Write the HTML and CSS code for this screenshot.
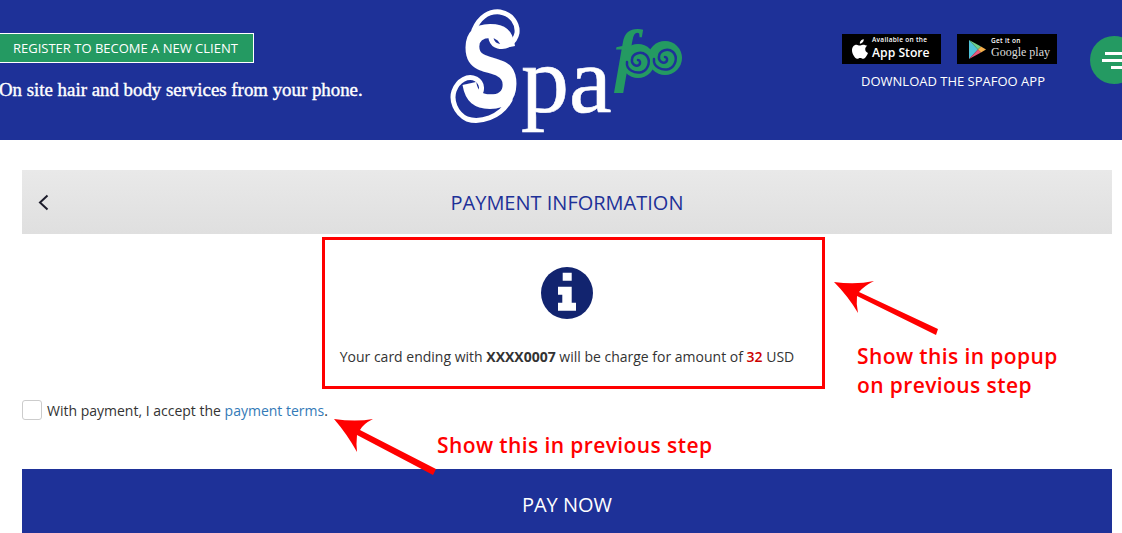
FILE: index.html
```html
<!DOCTYPE html>
<html lang="en">
<head>
    <meta charset="UTF-8">
    <meta name="viewport" content="width=device-width, initial-scale=1.0">
    <title>Spafoo - Payment Information</title>
    <link rel="stylesheet" href="styles.css">
</head>
<body>
    <!-- Header -->
    <div class="header">
        <div class="header-left">
            <a href="#" class="register-btn">REGISTER TO BECOME A NEW CLIENT</a>
            <p class="tagline">On site hair and body services from your phone.</p>
        </div>

        <svg class="logo" width="270" height="140" viewBox="0 0 270 140">
            <text class="logo-s" transform="translate(31 107) scale(0.75 1)">S</text>
            <g class="logo-curl">
                <path d="M44 30 C50 16 60 11 70 12 C82 14 88 24 87 33 C85 43 76 48 68 46 C61 44 59 36 63 32 C66 29 71 31 71 35"/>
                <path d="M80 100 C70 118 50 123 37 119 C25 113 21 100 24 91 C28 80 38 75 46 79 C53 83 53 92 48 95 C44 97 39 95 39 90"/>
            </g>
            <text class="logo-pa" x="91" y="112">pa</text>
            <text class="logo-f" x="184" y="78">f</text>
            <g class="logo-oo">
                <circle cx="208" cy="61" r="17"/>
                <circle cx="235" cy="58" r="17"/>
                <path class="logo-oo-swirl" transform="translate(208 61)" d="M-11 1 C-12 9 -3 13 4 11 C11 8 13 -1 8 -6 C3 -10 -5 -8 -6 -2 C-7 3 -2 6 1 4 C3 2 2 -1 0 -1"/>
                <path class="logo-oo-swirl" transform="translate(235 58)" d="M-11 1 C-12 9 -3 13 4 11 C11 8 13 -1 8 -6 C3 -10 -5 -8 -6 -2 C-7 3 -2 6 1 4 C3 2 2 -1 0 -1"/>
            </g>
        </svg>

        <div class="header-apps">
            <div class="badges">
                <a href="#" class="badge badge-apple">
                    <svg width="17" height="20" viewBox="0 0 18 21">
                        <path fill="#fff" d="M12.400 0.200c0.100 1.300-0.400 2.400-1.100 3.200-0.800 0.900-1.900 1.500-3 1.400-0.100-1.200 0.400-2.400 1.100-3.100 0.800-0.900 2-1.500 3-1.500zM16.200 7c-1.700 1.100-2.200 2.300-2.200 3.800 0 1.800 1.100 3.200 2.900 3.900-0.500 1.300-1 2.400-1.800 3.500-0.900 1.300-1.800 2.500-3.100 2.500-1.300 0-1.800-0.800-3.300-0.800-1.500 0-2 0.800-3.300 0.800-1.300 0-2.200-1.300-3.200-2.600C0.500 15.900 0 13.500 0 11.800 0 8.200 2.300 6 4.700 6c1.300 0 2.400 0.900 3.300 0.900 0.900 0 2.100-1 3.600-1 1.800 0 3.400 0.700 4.600 1.100z"/>
                    </svg>
                    <span class="badge-text">
                        <small>Available on the</small>
                        <b>App Store</b>
                    </span>
                </a>
                <a href="#" class="badge badge-google">
                    <svg width="17" height="19" viewBox="0 0 17 19">
                        <polygon fill="#4fc3d9" points="0,0 0,19 9,9.500"/>
                        <polygon fill="#6fd08c" points="0,0 12,6.500 9,9.500"/>
                        <polygon fill="#e8577a" points="0,19 12,12.500 9,9.500"/>
                        <polygon fill="#f5b04c" points="12,6.500 17,9.500 12,12.500 9,9.500"/>
                    </svg>
                    <span class="badge-text">
                        <small>Get it on</small>
                        <em>Google play</em>
                    </span>
                </a>
            </div>
            <p class="apps-caption">DOWNLOAD THE SPAFOO APP</p>
        </div>

        <a href="#" class="menu-btn">
            <span></span>
            <span></span>
            <span></span>
        </a>
    </div>

    <!-- Content -->
    <div class="content">
        <div class="title-bar">
            <svg class="back" width="11" height="17" viewBox="0 0 11 17">
                <path d="M9.500 1.500 L2 8.500 L9.500 15.500"/>
            </svg>
            <h1>PAYMENT INFORMATION</h1>
        </div>

        <div class="notice">
            <svg class="info-icon" width="52" height="52" viewBox="0 0 52 52">
                <circle cx="26" cy="26" r="26" fill="#12246f"/>
                <path fill="#fff" d="M17 19.700h13.700v16h4.300v8H17v-8h4.300v-8H17zM21.700 5.700h9v8h-9z"/>
            </svg>
            <p>Your card ending with <strong>XXXX0007</strong> will be charge for amount of <span class="amount">32</span> USD</p>
        </div>

        <label class="terms">
            <span class="checkbox"></span>
            <span>With payment, I accept the <a href="#">payment terms</a>.</span>
        </label>

        <a href="#" class="pay-btn">PAY NOW</a>
    </div>

    <!-- Review notes drawn over the page -->
    <svg class="notes" width="1122" height="533" viewBox="0 0 1122 533">
        <path d="M834 282 Q856 285 874 281 Q864 286 859 292 L938 329 L936 335 L857 296 Q856 304 858 313 Q848 296 834 282z"/>
        <path d="M334 419 Q356 422 373 419 Q363 424 360 430 L436 469 L433 475 L357 435 Q356 444 357 452 Q347 434 334 419z"/>
    </svg>
    <p class="note note-popup">Show this in popup<br>on previous step</p>
    <p class="note note-step">Show this in previous step</p>
</body>
</html>
```

FILE: styles.css
```css
html, body {
    margin: 0;
    height: 533px;
    overflow: hidden;
}

body {
    position: relative;
    background-color: #fff;
    font-family: "Open Sans", sans-serif;
    font-size: 14px;
    color: #333;
}

p {
    margin: 0;
}

a {
    text-decoration: none;
}

/* CSS for the header */
.header {
    display: flex;
    height: 140px;
    background-color: #1e3198;
    overflow: hidden;
}

.header-left {
    width: 430px;
    margin-left: -2px;
    padding-top: 33px;
    flex-shrink: 0;
    box-sizing: border-box;
}

.register-btn {
    display: inline-block;
    height: 30px;
    line-height: 28px;
    padding: 0 14px;
    box-sizing: border-box;
    width: 256px;
    border: 1px solid #fff;
    background-color: #249a62;
    color: #fff;
    font-size: 13px;
    white-space: nowrap;
}

.tagline {
    margin-top: 16px;
    margin-left: 1px;
    font-family: "Liberation Serif", serif;
    font-size: 18.85px;
    -webkit-text-stroke: 0.4px #fff;
    color: #fff;
    white-space: nowrap;
}

.logo {
    flex-shrink: 0;
    margin-left: 2px;
}

.logo-s {
    font-family: "Liberation Sans", sans-serif;
    font-size: 116px;
    font-weight: bold;
    fill: #fff;
    stroke: #fff;
    stroke-width: 2;
}

.logo-curl path {
    fill: none;
    stroke: #fff;
    stroke-width: 5;
    stroke-linecap: round;
}

.logo-pa {
    font-family: "Liberation Serif", serif;
    font-size: 96px;
    fill: #fff;
    stroke: #fff;
    stroke-width: 0.6;
}

.logo-f {
    font-family: "Liberation Serif", serif;
    font-style: italic;
    font-weight: bold;
    font-size: 70px;
    fill: #249a62;
}

.logo-oo circle {
    fill: #249a62;
}

.logo-oo-swirl {
    fill: none;
    stroke: #1e3198;
    stroke-width: 2.5;
    stroke-linecap: round;
}

.header-apps {
    width: 215px;
    margin-left: 142px;
    padding-top: 34px;
    flex-shrink: 0;
    box-sizing: border-box;
}

.badges {
    display: flex;
    gap: 16px;
}

.badge {
    display: flex;
    align-items: center;
    height: 30px;
    background-color: #000;
    color: #fff;
    box-sizing: border-box;
}

.badge-apple {
    width: 99px;
    padding-left: 10px;
    gap: 3px;
}

.badge-google {
    width: 100px;
    padding-left: 12px;
    gap: 5px;
}

.badge-text {
    display: flex;
    flex-direction: column;
    padding-bottom: 2px;
    white-space: nowrap;
}

.badge-text small {
    font-size: 6.5px;
    font-weight: 600;
    letter-spacing: 0.3px;
}

.badge-text b {
    font-size: 12.2px;
    font-weight: 600;
}

.badge-text em {
    font-family: "Liberation Serif", serif;
    font-style: normal;
    font-size: 12px;
    color: #ddd;
}

.apps-caption {
    margin-top: 8px;
    padding-left: 7px;
    text-align: center;
    font-size: 13px;
    color: #fff;
    white-space: nowrap;
}

.menu-btn {
    display: flex;
    flex-direction: column;
    flex-shrink: 0;
    gap: 4px;
    width: 48px;
    height: 48px;
    margin: 36px 0 0 33px;
    padding: 16px 0 0 12px;
    box-sizing: border-box;
    border-radius: 50%;
    background-color: #249a62;
}

.menu-btn span {
    display: block;
    height: 3px;
    background-color: #fff;
}

.menu-btn span:nth-child(1) {
    margin-left: 3px;
}

.menu-btn span:nth-child(3) {
    margin-left: 9px;
}

/* CSS for the content */
.content {
    padding: 30px 10px 0 22px;
}

.title-bar {
    display: grid;
    grid-template-columns: 1fr auto 1fr;
    align-items: center;
    height: 64px;
    background: linear-gradient(#e9e9e9, #dfdfdf);
}

.back {
    margin-left: 16px;
}

.back path {
    fill: none;
    stroke: #1d1d2b;
    stroke-width: 2;
}

.title-bar h1 {
    margin: 0;
    font-size: 20px;
    font-weight: normal;
    color: #1e3198;
}

.notice {
    width: 503px;
    height: 152px;
    margin: 3px 0 0 300px;
    padding: 27px 13px 0 0;
    box-sizing: border-box;
    border: 3px solid #f00;
    text-align: center;
}

.info-icon {
    display: block;
    margin: 0 auto;
}

.notice p {
    margin-top: 28px;
}

.amount {
    color: #c00;
    font-weight: 600;
}

.terms {
    display: flex;
    align-items: center;
    gap: 5px;
    margin-top: 11px;
}

.checkbox {
    width: 20px;
    height: 20px;
    box-sizing: border-box;
    border: 1px solid #ccc;
    border-radius: 3px;
}

.terms a {
    color: #337ab7;
}

.pay-btn {
    display: block;
    height: 72px;
    line-height: 72px;
    margin-top: 49px;
    background-color: #1e3198;
    color: #fff;
    text-align: center;
    font-size: 20px;
}

/* CSS for the review notes */
.notes {
    position: absolute;
    top: 0;
    left: 0;
}

.notes path {
    fill: #f00;
}

.note {
    position: absolute;
    font-size: 21px;
    font-weight: 600;
    line-height: 29px;
    letter-spacing: 0.4px;
    color: #f00;
    white-space: nowrap;
}

.note-popup {
    top: 342px;
    left: 857px;
}

.note-step {
    top: 431px;
    left: 437px;
}
```
